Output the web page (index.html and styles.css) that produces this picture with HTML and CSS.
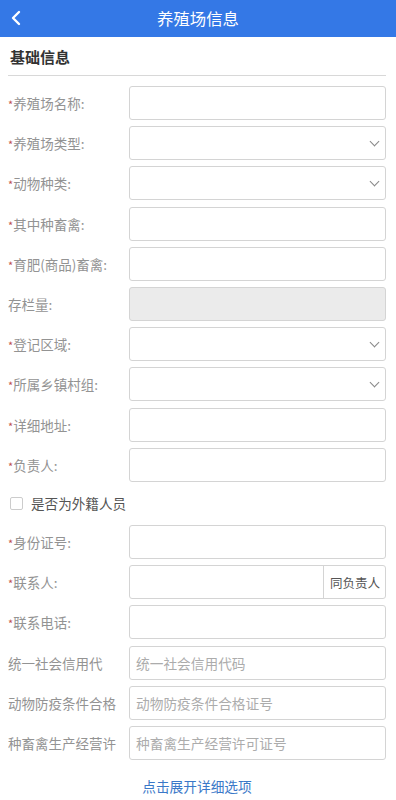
FILE: index.html
```html
<!DOCTYPE html>
<html lang="zh-CN">
<head>
    <meta charset="UTF-8">
    <meta name="viewport" content="width=device-width, initial-scale=1.0">
    <title>养殖场信息</title>
    <link rel="stylesheet" href="styles.css">
</head>
<body>
    <div class="topbar">
        <span class="back">
            <svg width="12" height="16" viewBox="0 0 12 16"><path d="M9 2 L3 8 L9 14" fill="none" stroke="#fff" stroke-width="2.4" stroke-linecap="round" stroke-linejoin="round"/></svg>
        </span>
        <div class="title">养殖场信息</div>
    </div>

    <div class="page">
        <div class="section-title">基础信息</div>

        <div class="form">
            <div class="row"><label class="label"><i>*</i>养殖场名称:</label><div class="field"></div></div>
            <div class="row"><label class="label"><i>*</i>养殖场类型:</label><div class="field select"><span class="arrow"></span></div></div>
            <div class="row"><label class="label"><i>*</i>动物种类:</label><div class="field select"><span class="arrow"></span></div></div>
            <div class="row"><label class="label"><i>*</i>其中种畜禽:</label><div class="field"></div></div>
            <div class="row"><label class="label"><i>*</i>育肥(商品)畜禽:</label><div class="field"></div></div>
            <div class="row"><label class="label">存栏量:</label><div class="field disabled"></div></div>
            <div class="row"><label class="label"><i>*</i>登记区域:</label><div class="field select"><span class="arrow"></span></div></div>
            <div class="row"><label class="label"><i>*</i>所属乡镇村组:</label><div class="field select"><span class="arrow"></span></div></div>
            <div class="row"><label class="label"><i>*</i>详细地址:</label><div class="field"></div></div>
            <div class="row"><label class="label"><i>*</i>负责人:</label><div class="field"></div></div>

            <div class="check-row">
                <span class="checkbox"></span>
                <span class="check-text">是否为外籍人员</span>
            </div>

            <div class="row"><label class="label"><i>*</i>身份证号:</label><div class="field"></div></div>
            <div class="row"><label class="label"><i>*</i>联系人:</label><div class="field group"><span class="group-input"></span><span class="addon">同负责人</span></div></div>
            <div class="row"><label class="label"><i>*</i>联系电话:</label><div class="field"></div></div>
            <div class="row"><label class="label">统一社会信用代</label><div class="field"><span class="ph">统一社会信用代码</span></div></div>
            <div class="row"><label class="label">动物防疫条件合格</label><div class="field"><span class="ph">动物防疫条件合格证号</span></div></div>
            <div class="row"><label class="label">种畜禽生产经营许</label><div class="field"><span class="ph">种畜禽生产经营许可证号</span></div></div>
        </div>

        <div class="more">点击展开详细选项</div>
    </div>
</body>
</html>
```

FILE: styles.css
```css
body {
    margin: 0;
    font-family: "Noto Sans CJK SC", "Noto Sans", sans-serif;
    background: #fff;
    color: #333;
    overflow: hidden;
}
.topbar {
    position: relative;
    height: 37px;
    background: #3478e6;
    display: flex;
    align-items: center;
    justify-content: center;
}
.back {
    position: absolute;
    left: 10px;
    top: 10px;
    display: flex;
}
.title {
    color: #fff;
    font-size: 16.4px;
    line-height: 1;
}
.page {
    padding: 0 10px 0 8px;
}
.section-title {
    font-size: 15px;
    font-weight: bold;
    color: #333;
    padding: 10px 0 0 2px;
    height: 28px;
    line-height: 20px;
    border-bottom: 1px solid #d8d8d8;
}
.form {
    display: flex;
    flex-direction: column;
    gap: 6.2px;
    padding-top: 10px;
}
.row {
    display: flex;
    align-items: center;
    height: 34px;
}
.label {
    width: 121px;
    flex-shrink: 0;
    font-size: 13.5px;
    color: #939393;
    white-space: nowrap;
    overflow: hidden;
}
.label i {
    font-style: normal;
    color: #c0504d;
    font-size: 11px;
}
.field {
    flex: 1;
    height: 100%;
    box-sizing: border-box;
    border: 1px solid #d4d4d4;
    border-radius: 3px;
    display: flex;
    align-items: center;
    position: relative;
}
.field.disabled {
    background: #ebebeb;
}
.select .arrow {
    position: absolute;
    right: 7px;
    top: 11px;
    width: 6px;
    height: 6px;
    border-right: 1.2px solid #888;
    border-bottom: 1.2px solid #888;
    transform: rotate(45deg);
}
.group {
    overflow: hidden;
}
.group-input {
    flex: 1;
}
.addon {
    height: 100%;
    display: flex;
    align-items: center;
    padding: 0 5px 0 6px;
    border-left: 1px solid #d4d4d4;
    font-size: 12.5px;
    color: #555;
}
.ph {
    padding-left: 6px;
    font-size: 13.7px;
    color: #acacac;
}
.check-row {
    display: flex;
    align-items: center;
    height: 31px;
    padding-left: 2px;
}
.checkbox {
    width: 11px;
    height: 11px;
    border: 1px solid #ccc;
    border-radius: 2px;
    margin-right: 8px;
}
.check-text {
    font-size: 13.6px;
    color: #555;
}
.more {
    text-align: center;
    font-size: 13.7px;
    color: #3a78c8;
    padding-top: 16px;
}
```
